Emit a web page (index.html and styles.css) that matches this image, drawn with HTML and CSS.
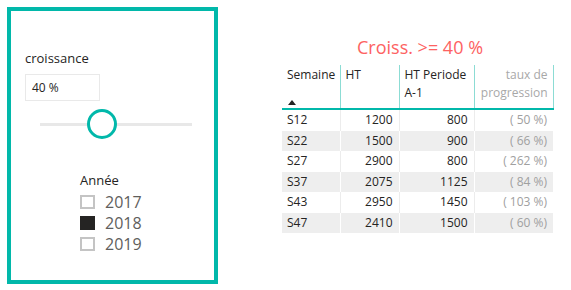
FILE: index.html
```html
<!DOCTYPE html>
<html>
<head>
<meta charset="utf-8">
<link rel="stylesheet" href="styles.css">
</head>
<body>
<div class="page">
  <div class="panel">
    <div class="label">croissance</div>
    <div class="input">40 %</div>
    <div class="slider">
      <div class="track"></div>
      <div class="thumb"></div>
    </div>
    <div class="years">
      <div class="years-title">Année</div>
      <div class="year"><span class="box"></span><span>2017</span></div>
      <div class="year"><span class="box on"></span><span>2018</span></div>
      <div class="year"><span class="box"></span><span>2019</span></div>
    </div>
  </div>
  <div class="report">
    <div class="title">Croiss. &gt;= 40 %</div>
    <table class="grid">
      <colgroup><col class="c1"><col class="c2"><col class="c3"><col class="c4"></colgroup>
      <thead>
        <tr>
          <th class="left">Semaine<span class="sort"></span></th>
          <th class="left">HT</th>
          <th class="left">HT Periode A-1</th>
          <th class="right muted">taux de progression</th>
        </tr>
      </thead>
      <tbody>
        <tr><td>S12</td><td class="num">1200</td><td class="num">800</td><td class="num pct">( 50 %)</td></tr>
        <tr><td>S22</td><td class="num">1500</td><td class="num">900</td><td class="num pct">( 66 %)</td></tr>
        <tr><td>S27</td><td class="num">2900</td><td class="num">800</td><td class="num pct">( 262 %)</td></tr>
        <tr><td>S37</td><td class="num">2075</td><td class="num">1125</td><td class="num pct">( 84 %)</td></tr>
        <tr><td>S43</td><td class="num">2950</td><td class="num">1450</td><td class="num pct">( 103 %)</td></tr>
        <tr><td>S47</td><td class="num">2410</td><td class="num">1500</td><td class="num pct">( 60 %)</td></tr>
      </tbody>
    </table>
  </div>
</div>
</body>
</html>
```
FILE: styles.css
```css
html, body {
  margin: 0;
  padding: 0;
  background: #ffffff;
}
body {
  font-family: "Segoe UI", "Open Sans", "Noto Sans", sans-serif;
  color: #252423;
  width: 571px;
  height: 290px;
  overflow: hidden;
}
.page {
  display: flex;
  align-items: flex-start;
  padding: 7px 0 0 7px;
}
.panel {
  box-sizing: border-box;
  width: 211px;
  height: 277px;
  border: 4px solid #01b8aa;
  padding: 38px 0 0 14px;
  display: flex;
  flex-direction: column;
}
.label {
  font-size: 13px;
  line-height: 18px;
  color: #252423;
}
.input {
  box-sizing: border-box;
  margin-top: 7px;
  width: 75px;
  height: 27px;
  border: 1px solid #e9e9e9;
  font-size: 12px;
  line-height: 25px;
  padding-left: 6px;
  color: #252423;
}
.slider {
  position: relative;
  margin: 8px 0 0 15px;
  width: 152px;
  height: 30px;
}
.track {
  position: absolute;
  left: 0;
  right: 0;
  top: 14px;
  height: 3px;
  background: #e8e8e8;
}
.thumb {
  position: absolute;
  left: 47px;
  top: 0;
  box-sizing: border-box;
  width: 30px;
  height: 30px;
  border-radius: 50%;
  border: 3px solid #01b8aa;
  background: #fff;
}
.years {
  margin: 32px 0 0 55px;
  display: flex;
  flex-direction: column;
}
.years-title {
  font-size: 13px;
  line-height: 18px;
  color: #252423;
  margin-bottom: 2px;
}
.year {
  display: flex;
  align-items: center;
  gap: 10px;
  height: 21px;
  font-size: 16px;
  color: #605e5c;
}
.box {
  box-sizing: border-box;
  width: 15px;
  height: 14px;
  border: 2px solid #c4c4c4;
  background: #fff;
}
.box.on {
  border-color: #252423;
  background: #252423;
}
.report {
  margin-left: 64px;
  width: 271px;
  display: flex;
  flex-direction: column;
}
.title {
  text-align: center;
  font-size: 18px;
  line-height: 24px;
  color: #fd6262;
  margin: 28px 0 0 5px;
}
.grid {
  margin-top: 6px;
  border-collapse: collapse;
  table-layout: fixed;
  width: 271px;
  font-size: 12px;
}
.c1 { width: 58px; }
.c2 { width: 59px; }
.c3 { width: 75px; }
.c4 { width: 79px; }
.grid th {
  font-weight: normal;
  vertical-align: top;
  padding: 1px 5px 0 5px;
  height: 42px;
  line-height: 18px;
  border-right: 1px solid #8cdcd4;
  border-bottom: 2px solid #01b8aa;
  position: relative;
  color: #252423;
}
.grid th.left { text-align: left; }
.grid th.right { text-align: right; }
.grid th.muted { color: #a8a8a8; }
.sort {
  position: absolute;
  left: 6px;
  bottom: 3px;
  width: 0;
  height: 0;
  border-left: 4px solid transparent;
  border-right: 4px solid transparent;
  border-bottom: 5px solid #252423;
}
.grid td {
  height: 20.5px;
  padding: 0 6px 0 5px;
  line-height: 20px;
  border-right: 1px solid #ececec;
  white-space: nowrap;
}
.grid td:last-child { border-right: none; }
.grid tbody tr:nth-child(even) td {
  background: #eeeeee;
  border-right-color: #ffffff;
}
.grid tbody tr:nth-child(even) td:last-child { border-right: none; }
.num { text-align: right; }
.pct { color: #a0a0a0; }
```
